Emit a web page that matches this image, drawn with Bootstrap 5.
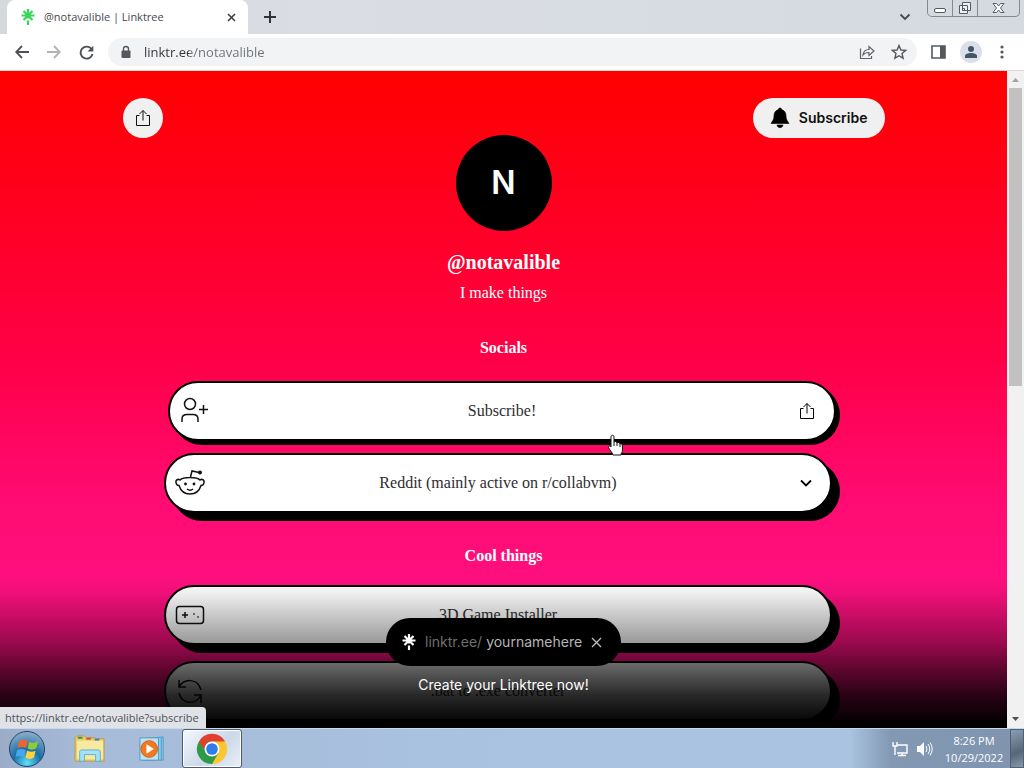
<!DOCTYPE html>
<html lang="en">
<head>
<meta charset="utf-8">
<meta name="viewport" content="width=device-width, initial-scale=1">
<title>@notavalible | Linktree</title>
<link href="https://cdn.jsdelivr.net/npm/bootstrap@5.3.0/dist/css/bootstrap.min.css" rel="stylesheet">
<style>
  body { font-family: "Open Sans", "Noto Sans", sans-serif; font-size: 11px; line-height: 16px; }
  button { padding: 0; border: 0; background: none; color: inherit; }
  svg { display: block; flex: none; }
  a { color: inherit; text-decoration: none; }

  /* browser frame */
  .tab-strip { height: 34px; background: linear-gradient(90deg, #d4d9dc, #dadde4 30%, #d5dae0); }
  .tab-active { width: 241px; margin-left: 7px; padding: 0 12px 0 13px; background: #fff; border-radius: 8px 8px 0 0; color: #45494d; }
  .win-controls { height: 17px; margin-right: 4px; border: 1px solid #85898f; border-top: 0; border-radius: 0 0 5px 5px; overflow: hidden; }
  .win-controls button { width: 25px; display: grid; place-items: center; border-right: 1px solid #85898f; }
  .win-controls button:last-child { width: 41px; border-right: 0; }
  .toolbar { height: 37px; padding: 0 20px 0 15px; gap: 18px; border-bottom: 1px solid #e3d5d5; background: #fff; color: #5f6368; }
  .omnibox { height: 28px; border-radius: 14px; background: #f1f3f4; margin: 0 -4px; padding: 0 10px 0 12px; }
  .omnibox input { border: 0; padding: 0; outline: 0; font-size: 13px; line-height: 20px; color: transparent;
    background: linear-gradient(90deg, #303438 49px, #6d7278 49px); -webkit-background-clip: text; background-clip: text; }
  .account { width: 22px; height: 22px; margin: 0 -4px; background: #dbe0e8; }

  /* profile page */
  .profile { background: linear-gradient(#f00, #ff0022 140px, #ff0048 290px, #ff0b72 430px, #ff1080 520px); color: #fff;
    font-family: "Liberation Serif", serif; font-size: 16px; line-height: 24px; }
  .top-actions { max-width: 762px; height: 40px; margin-top: 27px; }
  .pill { height: 40px; border-radius: 20px; background: #f0f0f0; color: #111; font: 600 14px/20px Inter, sans-serif; }
  .pill-round { width: 40px; }
  .pill-wide { padding: 0 17px; width: 132px; }
  .avatar { width: 96px; height: 96px; margin-top: -3px; background: #000; font: 600 32px/96px Inter, sans-serif; }
  .profile h1 { font-size: 20px; line-height: 24px; font-weight: 700; margin: 19px 0 7px; }
  .profile h2 { font-size: 16px; line-height: 24px; font-weight: 700; margin: 31px 0 17px; }
  .links { max-width: 679px; }
  .stack { padding-right: 11px; gap: 16px; }
  .link-btn { height: 60px; border: 2px solid #000; border-radius: 30px; background: #fff; color: #2e2e2e; box-shadow: 8px 8px 0 #000; padding: 0 9px; }
  .link-btn.pressed { position: relative; top: 4px; left: 4px; box-shadow: 4px 4px 0 #000; }
  .slot { width: 30px; color: #000; }
  .fade-out { height: 153px; background: linear-gradient(rgba(0,0,0,0), rgba(0,0,0,.05) 16px, rgba(0,0,0,.4) 68px, rgba(0,0,0,.58) 88px, rgba(0,0,0,.84) 120px, #000 150px); }
  .cta { bottom: 33px; font: 14px/20px Inter, sans-serif; }
  .cta-pill { width: 235px; height: 48px; border-radius: 24px; background: #000; color: #6f6f6f; padding: 0 19px 0 15px; }
  .cta-pill input { width: 96px; border: 0; padding: 0; background: none; color: #b5b5b5; outline: 0; }
  .cta a { margin-top: 9px; }
  .pointer { left: 607px; top: 363px; }
  .status-url { height: 21px; padding: 2px 7px 0 5px; background: #dfe2e6; color: #505357; border-radius: 0 4px 0 0; line-height: 18px; }
  .scroller { width: 17px; background: #f1f1f1; }
  .scroller-thumb { width: 13px; height: 298px; background: #c1c1c1; }

  /* desktop taskbar */
  .taskbar { height: 40px; border-top: 1px solid #c8d7e9; background: linear-gradient(90deg, #9aacc8, #a6bbd8 8%, #a9c3e0 50%, #a9c3e0 83%, #8298b3 87%, #8094ae); }
  .task-on { width: 60px; height: 39px; border: 1px solid #4c5c70; border-radius: 3px; background: linear-gradient(135deg, #f4f8fc, #ccd8e8 55%, #e8eff7); box-shadow: inset 0 0 0 1px #fff; }
  .clock { color: #fff; line-height: 17px; width: 64px; }
  .show-desktop { width: 14px; height: 39px; border: 1px solid #4f6074; background: linear-gradient(160deg, #8b9db3, #566779 60%, #8798ad); }
</style>
</head>
<body class="vh-100 d-flex flex-column overflow-hidden">

<svg class="d-none">
  <symbol id="i-share" viewBox="0 0 16 18"><path d="M4.500 6.500H1.500V16.500H14.500V6.500H11.500M8 11.500V1.500M4.500 5L8 1.500L11.500 5" fill="none" stroke="currentColor"/></symbol>
  <symbol id="i-tree" viewBox="0 0 14 16"><path d="M7 0V9.500M.5 6.500H13.500M2.500 2L11.500 11M11.500 2L2.500 11M7 11.500V16" fill="none" stroke="currentColor" stroke-width="2.200"/></symbol>
</svg>

<header>
  <div class="tab-strip d-flex">
    <div class="tab-active d-flex align-items-center">
      <svg width="16" height="16" color="#36d657"><use href="#i-tree"/></svg>
      <span class="ms-2 flex-grow-1">@notavalible | Linktree</span>
      <button aria-label="Close tab"><svg width="9" height="9"><path d="M1 1L8 8M8 1L1 8" stroke="#3c4043" stroke-width="1.600"/></svg></button>
    </div>
    <button class="ms-3" aria-label="New tab"><svg width="12" height="12"><path d="M6 0V12M0 6H12" stroke="#303438" stroke-width="2"/></svg></button>
    <button class="ms-auto me-3" aria-label="Search tabs"><svg width="12" height="8"><path d="M1.500 1.500L6 6L10.500 1.500" fill="none" stroke="#45494d" stroke-width="1.800"/></svg></button>
    <div class="win-controls d-flex">
      <button aria-label="Minimize"><svg width="13" height="16"><rect x=".5" y="8.500" width="11" height="4" rx="1.500" fill="#fff" stroke="#555b66"/></svg></button>
      <button aria-label="Restore"><svg width="14" height="16"><path d="M4.500 2.500H12.500V10.500H4.500ZM1.500 5.500H9.500V13.500H1.500ZM4.500 8.500H6.500V10.500H4.500Z" fill="#eef0f4" stroke="#555b66"/></svg></button>
      <button aria-label="Close"><svg width="13" height="16"><path d="M1 3.500H4.500L6.500 6L8.500 3.500H12L8.500 8L12 12.500H8.500L6.500 10L4.500 12.500H1L4.500 8Z" fill="#fff" stroke="#555b66"/></svg></button>
    </div>
  </div>
  <div class="toolbar d-flex align-items-center">
    <button aria-label="Back"><svg width="14" height="14"><path d="M14 7H1.500M7 1L1.200 7L7 13" fill="none" stroke="#4d5156" stroke-width="1.800"/></svg></button>
    <button aria-label="Forward"><svg width="14" height="14"><path d="M0 7H12.500M7 1L12.800 7L7 13" fill="none" stroke="#b0b3b6" stroke-width="1.800"/></svg></button>
    <button aria-label="Reload"><svg width="15" height="15"><path d="M12.600 4.200A6 6 0 1 0 13.500 9" fill="none" stroke="#4d5156" stroke-width="1.900"/><path d="M14.300 .8V6.500H8.600Z" fill="#4d5156"/></svg></button>
    <div class="omnibox d-flex align-items-center flex-grow-1">
      <svg width="12" height="14"><path d="M3.500 6V4A2.500 2.500 0 0 1 8.500 4V6" fill="none" stroke="#54585d" stroke-width="1.400"/><rect x="1.500" y="5.500" width="9" height="7.500" rx="1" fill="#54585d"/></svg>
      <input class="flex-grow-1 ms-2 ps-1 me-2" type="text" aria-label="Address" value="linktr.ee/notavalible">
      <button aria-label="Share page"><svg width="16" height="16" fill="none" stroke="#5f6368"><path d="M1.500 4.500V14.500H12.500V12M4 11C4.500 7 7 5.500 10 5.500V2.500L15 7L10 11.500V8.500C7.500 8.500 5.500 9 4 11Z" stroke-width="1.200"/></svg></button>
      <button class="ms-3" aria-label="Bookmark"><svg width="16" height="16"><path d="M8 1.500L9.900 6L14.700 6.400L11 9.500L12.100 14.200L8 11.700L3.900 14.200L5 9.500L1.300 6.400L6.100 6Z" fill="none" stroke="#54585d" stroke-width="1.400"/></svg></button>
    </div>
    <button aria-label="Side panel"><svg width="15" height="14"><path d="M1 1H14V13H1Z" fill="none" stroke="#54585d" stroke-width="1.600"/><path d="M9 1H14V13H9Z" fill="#54585d"/></svg></button>
    <button class="account rounded-circle d-grid" aria-label="Profile"><svg class="m-auto" width="14" height="14" fill="#46546a"><circle cx="7" cy="4" r="3"/><path d="M1 13V11C1 9 4 8 7 8S13 9 13 11V13Z"/></svg></button>
    <button class="ps-1" aria-label="Menu"><svg width="4" height="16" fill="#54585d"><circle cx="2" cy="3" r="1.600"/><circle cx="2" cy="8" r="1.600"/><circle cx="2" cy="13" r="1.600"/></svg></button>
  </div>
</header>

<div class="d-flex flex-grow-1 overflow-hidden position-relative">
  <main class="profile flex-grow-1 position-relative overflow-hidden text-center">
    <div class="top-actions mx-auto d-flex justify-content-between">
      <button class="pill pill-round d-flex align-items-center justify-content-center" aria-label="Share"><svg width="16" height="18"><use href="#i-share"/></svg></button>
      <button class="pill pill-wide d-flex align-items-center justify-content-between"><svg width="20" height="22"><path d="M10 1C11.200 1 11.600 1.800 11.600 2.600C14.800 3.500 16 6 16 9C16 13 18 14.500 19 16.500H1C2 14.500 4 13 4 9C4 6 5.200 3.500 8.400 2.600C8.400 1.800 8.800 1 10 1ZM7 18H13C12.500 21.500 7.500 21.500 7 18Z" fill="#000" stroke="#000" stroke-width=".6"/></svg><span>Subscribe</span></button>
    </div>
    <div class="avatar rounded-circle mx-auto">N</div>
    <h1>@notavalible</h1>
    <div>I make things</div>
    <div class="links mx-auto">
      <h2>Socials</h2>
      <div class="stack d-flex flex-column">
        <a href="#" class="link-btn pressed d-flex align-items-center">
          <svg class="slot" height="30" viewBox="0 0 30 30" fill="none" stroke="#111" stroke-width="1.500"><circle cx="11" cy="8" r="5.500"/><path d="M3 26V23C3 19.500 5 18.500 8 18.500H14C17 18.500 19 19.500 19 23V26M24.500 9V18M20 13.500H29"/></svg>
          <span class="flex-grow-1">Subscribe!</span>
          <svg class="slot" height="18"><use href="#i-share" x="4" width="16" height="18"/></svg>
        </a>
        <a href="#" class="link-btn d-flex align-items-center">
          <svg class="slot" height="30" viewBox="0 0 30 30" fill="none" stroke="#111" stroke-width="1.500"><path d="M5 12C8 8.500 22 8.500 25 12C27 10.500 29.500 12 29 14.500C28.800 16.500 27.500 17.500 26 17.500C24 24 20 26 15 26S6 24 4 17.500C2.500 17.500 1.200 16.500 1 14.500C.5 12 3 10.500 5 12ZM15.500 9L17 3L24 4.500M12 21Q15 23.500 18 21"/><g fill="#111" stroke="none"><circle cx="10.500" cy="16" r="1.400"/><circle cx="19" cy="16" r="1.400"/><circle cx="25" cy="4.500" r="2"/></g></svg>
          <span class="flex-grow-1">Reddit (mainly active on r/collabvm)</span>
          <svg class="slot" height="8" viewBox="-9 0 30 8"><path d="M1 1.500L6 6.500L11 1.500" fill="none" stroke="#000" stroke-width="1.800"/></svg>
        </a>
      </div>
      <h2>Cool things</h2>
      <div class="stack d-flex flex-column">
        <a href="#" class="link-btn d-flex align-items-center">
          <svg class="slot" height="20" viewBox="0 0 30 20" fill="none" stroke="#111" stroke-width="1.500"><rect x="1.500" y="1.500" width="27" height="17" rx="3"/><path d="M10 7V13M7 10H13"/><path d="M18 9H20M22 12H24" stroke-width="1"/></svg>
          <span class="flex-grow-1">3D Game Installer</span><span class="slot"></span>
        </a>
        <a href="#" class="link-btn d-flex align-items-center">
          <svg class="slot" height="30" viewBox="0 0 30 30" fill="none" stroke="#111" stroke-width="1.500"><path d="M4 4V11H11M4 11C9 2 23 2 26 14M26 27V19H19M26 19C21 29 7 29 4 17"/></svg>
          <span class="flex-grow-1">.bat to .exe converter</span><span class="slot"></span>
        </a>
      </div>
    </div>
    <div class="fade-out position-absolute bottom-0 start-0 w-100"></div>
    <div class="cta position-absolute start-0 w-100">
      <div class="cta-pill d-flex align-items-center mx-auto">
        <svg width="16" height="16" color="#fff"><use href="#i-tree"/></svg>
        <label class="ms-2 me-1" for="name">linktr.ee/</label>
        <input id="name" type="text" value="yournamehere">
        <button class="ms-auto" aria-label="Dismiss"><svg width="11" height="11"><path d="M1 1L10 10M10 1L1 10" stroke="#bbb" stroke-width="1.400"/></svg></button>
      </div>
      <a href="#" class="d-block">Create your Linktree now!</a>
    </div>
    <svg class="pointer position-absolute" width="18" height="24" viewBox="0 0 18 24"><path d="M4 12V3C4 .6 7 .6 7 3V8C8 7 10 7.500 10 9C11 8 13 8.500 13 10C14 9.300 15.500 10 15.500 12V16C15.500 18 14 19 14 21H6C5.500 18.500 2.500 16 1.500 13.500C1 12 3 11 4 13Z" fill="#fff" stroke="#111"/><path d="M7 8V12M10 9V12M13 10V13" stroke="#111"/></svg>
  </main>
  <div class="scroller d-flex flex-column align-items-center">
    <svg width="17" height="17"><path d="M5 11L8.500 7L12 11Z" fill="#a3a3a3"/></svg>
    <div class="scroller-thumb"></div>
    <svg class="mt-auto" width="17" height="17"><path d="M5 6L8.500 10L12 6Z" fill="#505050"/></svg>
  </div>
  <div class="status-url position-absolute bottom-0 start-0">https://linktr.ee/notavalible?subscribe</div>
</div>

<footer class="taskbar d-flex align-items-center">
  <button class="ms-2" aria-label="Start"><svg width="38" height="38" viewBox="0 0 38 38"><defs><radialGradient id="orb" cx=".5" cy=".9" r=".9"><stop offset="0" stop-color="#5fe3f8"/><stop offset=".45" stop-color="#1b6ea6"/><stop offset="1" stop-color="#93b0cb"/></radialGradient></defs><circle cx="19" cy="19" r="17.500" fill="url(#orb)" stroke="#1e4468"/><g transform="translate(-.5 -.5) scale(1.060)"><path d="M11 11Q15 8.500 19 11L17.500 17.500Q13.500 15.500 9.500 17.500Z" fill="#f0642a"/><path d="M20.500 11.500Q24.500 13.500 29 11L27 18Q23 20 19 18Z" fill="#8ecb3a"/><path d="M9 19.500Q13 17.500 17 19.500L15.500 26Q11.500 24 7.500 26Z" fill="#49a5ee"/><path d="M18.500 20Q22.500 22 26.500 20L25 26.500Q21 29 17 26.500Z" fill="#ffd13a"/></g></svg></button>
  <button class="ms-4 ps-1" aria-label="File Explorer"><svg width="32" height="30" viewBox="0 0 34 32"><path d="M1 4L3 2H11L13 4H22L24 5H32V29H1Z" fill="#e8ca67" stroke="#bd9b45"/><path d="M3 7H31V27H3Z" fill="#f7e9a0"/><path d="M4 3H9V5H4Z" fill="#2a9c50"/><path d="M13 4H18V6H13Z" fill="#db5137"/><path d="M22 5H27V7H22Z" fill="#397fd0"/><path d="M6 29V19Q6 17 8 17H26Q28 17 28 19V29H23V22H11V29Z" fill="#a6e1f5" stroke="#58afd5"/></svg></button>
  <button class="ms-4 ps-2" aria-label="Media Player"><svg width="28" height="26" viewBox="0 0 30 28"><path d="M5 3L27 1V26L5 26Z" fill="#8ec9e6" stroke="#4b9cc5"/><path d="M25 2V26" stroke="#4b9cc5"/><path d="M2 2H22V26H2Z" fill="#bde2f2" stroke="#469cc8"/><circle cx="12" cy="14" r="9" fill="#f07a24" stroke="#d95e14"/><path d="M9 9L17 14L9 19Z" fill="#fff"/></svg></button>
  <button class="task-on ms-3 d-grid" aria-label="Chrome"><svg class="m-auto" width="32" height="32" viewBox="0 0 34 34"><path d="M17 17L3.100 9A16 16 0 0 1 30.900 9Z" fill="#e0412f"/><path d="M17 17L30.900 9A16 16 0 0 1 17 33Z" fill="#fbc72c"/><path d="M17 17L17 33A16 16 0 0 1 3.100 9Z" fill="#2c9a48"/><path d="M17 9H30.900L24 21Z" fill="#fbc72c"/><path d="M3.100 9L10 21L17 17V9Z" fill="#2c9a48"/><path d="M3.100 9H30.900H17L10 13L8 17Z" fill="#e0412f"/><path d="M24 21L17 33L10 21Z" fill="#2c9a48"/><circle cx="17" cy="17" r="8" fill="#fff"/><circle cx="17" cy="17" r="6.200" fill="#2f7de9"/></svg></button>
  <button class="ms-auto" aria-label="Network"><svg width="16" height="16" fill="none" stroke="#fff" stroke-width="1.400"><path d="M5 4H15V12H5M10 12V14M6 14.500H14M1 1V5H5V1M3 5V14"/></svg></button>
  <button class="ms-2" aria-label="Volume"><svg width="18" height="16"><path d="M1 5H4L8 1V15L4 11H1Z" fill="#fff"/><path d="M10 5Q12 8 10 11M12 3Q15.500 8 12 13M14 1.500Q18.500 8 14 14.500" fill="none" stroke="#fff"/></svg></button>
  <div class="clock text-center ms-2 me-1">8:26 PM<br>10/29/2022</div>
  <button class="show-desktop" aria-label="Show desktop"></button>
</footer>

<script src="https://cdn.jsdelivr.net/npm/bootstrap@5.3.0/dist/js/bootstrap.bundle.min.js"></script>
</body>
</html>
